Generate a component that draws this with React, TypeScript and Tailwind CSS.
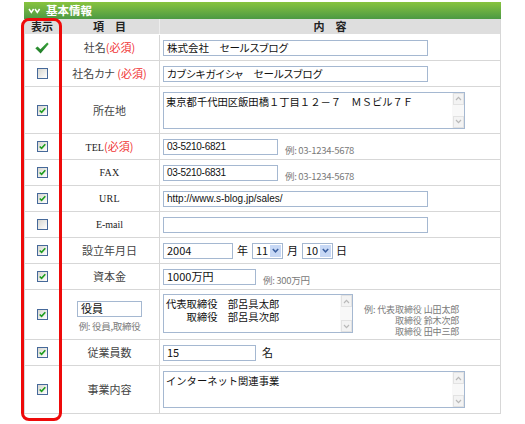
import React from "react";

const SERIF = "font-['Liberation_Serif','Noto_Sans_CJK_JP',serif]";
const SANS = "font-['Liberation_Sans','Noto_Sans_CJK_JP',sans-serif]";

function CheckBox({ checked }: { checked: boolean }) {
  return (
    <div className="w-[11px] h-[11px] border border-[#46699a] bg-linear-to-br from-[#d6d6d0] to-white flex items-center justify-center">
      {checked && (
        <svg width="7" height="7" viewBox="0 0 7 7">
          <path d="M0.7 3.5 L2.6 5.4 L6.3 1.3" fill="none" stroke="#1e9e1e" strokeWidth="1.6" />
        </svg>
      )}
    </div>
  );
}

function BigCheck() {
  return (
    <svg width="14" height="12" viewBox="0 0 14 12">
      <defs>
        <linearGradient id="gc" x1="0" y1="0" x2="0" y2="1">
          <stop offset="0" stopColor="#3aa43a" />
          <stop offset="1" stopColor="#1f7a28" />
        </linearGradient>
      </defs>
      <path d="M0.3 6.2 L2.6 4.6 L5.4 7.3 L12.2 0.6 L13.7 2.1 L5.6 11.4 Z" fill="url(#gc)" />
    </svg>
  );
}

function Input({ w, children, font }: { w: string; children?: React.ReactNode; font?: string }) {
  return (
    <div
      className={`h-[16px] shrink-0 border border-[#a5b8d1] bg-white flex items-center pl-[3px] text-[#111] whitespace-nowrap overflow-hidden ${w} ${font ?? "text-[10.5px] [font-feature-settings:'palt']"}`}
    >
      {children}
    </div>
  );
}

function ScrollBtn({ up }: { up?: boolean }) {
  return (
    <div className="w-[11px] h-[12px] border border-[#e2e2e2] bg-[#f3f3f3] flex items-center justify-center">
      <svg width="7" height="5" viewBox="0 0 7 5">
        <path d={up ? "M1 4 L3.5 1.3 L6 4" : "M1 1 L3.5 3.7 L6 1"} fill="none" stroke="#b9b9b9" strokeWidth="1.2" />
      </svg>
    </div>
  );
}

function TextArea({ w, h, children, className }: { w: string; h: string; children: React.ReactNode; className?: string }) {
  return (
    <div className={`flex shrink-0 border border-[#a5b8d1] bg-white ${w} ${h} ${className ?? ""}`}>
      <div className="flex-1 pl-[2px] pt-[2px] text-[10.3px] leading-[13px] text-[#111] whitespace-pre">{children}</div>
      <div className="w-[12px] flex flex-col justify-between items-end bg-[#f8f8f8]">
        <ScrollBtn up />
        <ScrollBtn />
      </div>
    </div>
  );
}

function Select({ value }: { value: string }) {
  return (
    <div className="h-[16px] w-[31px] shrink-0 border border-[#a5b8d1] bg-white flex p-[1px]">
      <div className="flex-1 flex items-center pl-[2px] text-[11px] text-[#111]">{value}</div>
      <div className="w-[11px] bg-[#c7d8f5] flex items-center justify-center">
        <svg width="7" height="5" viewBox="0 0 7 5">
          <path d="M0.8 0.9 L3.5 3.8 L6.2 0.9" fill="none" stroke="#3b5f9f" strokeWidth="1.5" />
        </svg>
      </div>
    </div>
  );
}

function Ex({ children }: { children: React.ReactNode }) {
  return <span className="text-[9.5px] text-[#7a7a7a] tracking-[-0.3px] whitespace-nowrap">{children}</span>;
}

function Req() {
  return <span className="text-[#f03434]">(必須)</span>;
}

function Row({
  h,
  c1,
  c2,
  c3,
  c3Class,
}: {
  h: string;
  c1: React.ReactNode;
  c2: React.ReactNode;
  c3: React.ReactNode;
  c3Class?: string;
}) {
  return (
    <div className={`flex border-b border-[#d7d7d7] ${h}`}>
      <div className="w-[35px] shrink-0 border-r border-[#d7d7d7] flex items-center justify-center">{c1}</div>
      <div className="w-[100px] shrink-0 border-r border-[#d7d7d7] flex items-center justify-center text-[11px] text-[#444] [font-feature-settings:'palt']">
        {c2}
      </div>
      <div className={`flex-1 flex pl-[3px] ${c3Class ?? "items-center"}`}>{c3}</div>
    </div>
  );
}

export default function App() {
  return (
    <div className="relative w-[525px] h-[424px] bg-white overflow-hidden font-['Noto_Sans_CJK_JP',sans-serif] text-[#333]">
      <div className="ml-[24px] pt-[2px] w-[477px]">
        <div className="h-[17px] bg-linear-to-b from-[#88c43e] to-[#4b9943] flex items-center pl-[4px] gap-[5px] text-white text-[11.5px] font-bold">
          <svg width="13" height="8" viewBox="0 0 13 8">
            <path d="M1 2 L3.3 5.5 L5.6 2 M7 2 L9.3 5.5 L11.6 2" fill="none" stroke="#fff" strokeWidth="1.5" />
          </svg>
          <span>基本情報</span>
        </div>
        <div className="border-l border-r border-[#d7d7d7]">
          <div className="flex h-[16px] bg-[#dedede] font-bold text-[11px] text-[#222] border-b border-white">
            <div className="w-[35px] shrink-0 border-r border-[#ededed] flex items-center justify-center">表示</div>
            <div className="w-[100px] shrink-0 border-r border-[#ededed] flex items-center justify-center">項　目</div>
            <div className="flex-1 flex items-center justify-center">内　容</div>
          </div>

          <Row
            h="h-[26px]"
            c1={<BigCheck />}
            c2={
              <span>
                社名<Req />
              </span>
            }
            c3={<Input w="w-[265px]">株式会社　セールスブログ</Input>}
          />
          <Row
            h="h-[26px]"
            c1={<CheckBox checked={false} />}
            c2={
              <span>
                社名カナ <Req />
              </span>
            }
            c3={<Input w="w-[265px]">カブシキガイシャ　セールスブログ</Input>}
          />
          <Row
            h="h-[47px]"
            c1={<CheckBox checked />}
            c2={<span>所在地</span>}
            c3={
              <TextArea w="w-[302px]" h="h-[37px]">
                東京都千代田区飯田橋１丁目１２－７　ＭＳビル７Ｆ
              </TextArea>
            }
          />
          <Row
            h="h-[26px]"
            c1={<CheckBox checked />}
            c2={
              <span>
                <span className={`${SERIF} text-[10px] text-[#222]`}>TEL</span>
                <Req />
              </span>
            }
            c3={
              <>
                <Input w="w-[115px]" font={`${SANS} text-[10px] tracking-[-0.3px]`}>
                  03-5210-6821
                </Input>
                <span className="ml-[7px]">
                  <Ex>例: 03-1234-5678</Ex>
                </span>
              </>
            }
          />
          <Row
            h="h-[26px]"
            c1={<CheckBox checked />}
            c2={<span className={`${SERIF} text-[10px] tracking-[0.3px] text-[#222]`}>FAX</span>}
            c3={
              <>
                <Input w="w-[115px]" font={`${SANS} text-[10px] tracking-[-0.3px]`}>
                  03-5210-6831
                </Input>
                <span className="ml-[7px]">
                  <Ex>例: 03-1234-5678</Ex>
                </span>
              </>
            }
          />
          <Row
            h="h-[26px]"
            c1={<CheckBox checked />}
            c2={<span className={`${SERIF} text-[10px] tracking-[0.3px] text-[#222]`}>URL</span>}
            c3={
              <Input w="w-[265px]" font={`${SANS} text-[10px]`}>
                http://www.s-blog.jp/sales/
              </Input>
            }
          />
          <Row
            h="h-[26px]"
            c1={<CheckBox checked={false} />}
            c2={<span className={`${SERIF} text-[10px] text-[#222]`}>E-mail</span>}
            c3={<Input w="w-[265px]" />}
          />
          <Row
            h="h-[26px]"
            c1={<CheckBox checked />}
            c2={<span>設立年月日</span>}
            c3={
              <>
                <Input w="w-[70px]" font="text-[11px]">
                  2004
                </Input>
                <span className="ml-[4px] mr-[4px] text-[11px] text-[#111]">年</span>
                <Select value="11" />
                <span className="ml-[4px] mr-[4px] text-[11px] text-[#111]">月</span>
                <Select value="10" />
                <span className="ml-[3px] text-[11px] text-[#111]">日</span>
              </>
            }
          />
          <Row
            h="h-[26px]"
            c1={<CheckBox checked />}
            c2={<span>資本金</span>}
            c3={
              <>
                <Input w="w-[93px]" font="text-[11px]">
                  1000万円
                </Input>
                <span className="ml-[7px]">
                  <Ex>例: 300万円</Ex>
                </span>
              </>
            }
          />
          <Row
            h="h-[50px]"
            c1={<CheckBox checked />}
            c2={
              <div className="flex flex-col items-center pt-[2px]">
                <Input w="w-[65px]" font="text-[11px]">
                  役員
                </Input>
                <div className="mt-[3px] leading-[10px]">
                  <Ex>例: 役員,取締役</Ex>
                </div>
              </div>
            }
            c3Class="items-start"
            c3={
              <>
                <TextArea w="w-[190px]" h="h-[39px]" className="mt-[4px]">
                  {"代表取締役　部呂具太郎\n　　取締役　部呂具次郎"}
                </TextArea>
                <div className="ml-[11px] mt-[14px] flex flex-col items-end text-[9px] leading-[11px] text-[#7a7a7a] tracking-[-0.1px]">
                  <span>例: 代表取締役 山田太郎</span>
                  <span>取締役 鈴木次郎</span>
                  <span>取締役 田中三郎</span>
                </div>
              </>
            }
          />
          <Row
            h="h-[26px]"
            c1={<CheckBox checked />}
            c2={<span>従業員数</span>}
            c3={
              <>
                <Input w="w-[93px]" font="text-[11px]">
                  15
                </Input>
                <span className="ml-[6px] text-[11px] text-[#111]">名</span>
              </>
            }
          />
          <Row
            h="h-[48px]"
            c1={<CheckBox checked />}
            c2={<span>事業内容</span>}
            c3={
              <TextArea w="w-[302px]" h="h-[37px]">
                インターネット関連事業
              </TextArea>
            }
          />
        </div>
      </div>
      <div className="absolute left-[21px] top-[18px] w-[41px] h-[403px] border-[3px] border-[#ee0a0a] rounded-[8px]" />
    </div>
  );
}
